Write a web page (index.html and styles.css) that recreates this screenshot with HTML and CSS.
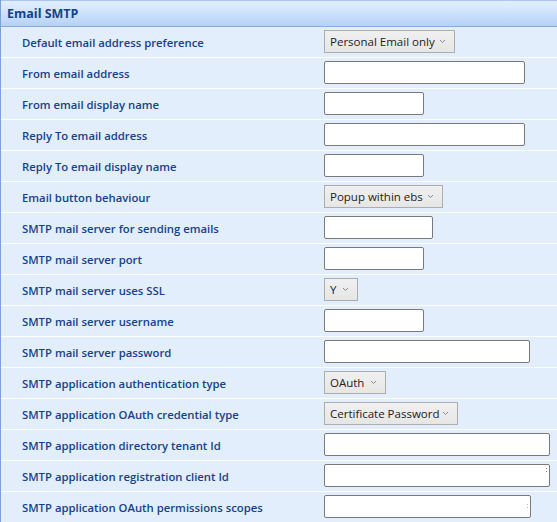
FILE: index.html
```html
<!DOCTYPE html>
<html>
<head>
<meta charset="utf-8">
<link rel="stylesheet" href="styles.css">
</head>
<body>
<div class="panel">
  <div class="panel-header">Email SMTP</div>
  <div class="rows">
    <div class="row"><div class="label">Default email address preference</div><div class="field"><div class="select w131"><span>Personal Email only</span><svg class="chev" width="7" height="5" viewBox="0 0 7 5"><path d="M1 1 L3.5 3.5 L6 1" fill="none" stroke="#888" stroke-width="1"/></svg></div></div></div>
    <div class="row"><div class="label">From email address</div><div class="field"><input class="text w201" type="text"></div></div>
    <div class="row"><div class="label">From email display name</div><div class="field"><input class="text w100" type="text"></div></div>
    <div class="row"><div class="label">Reply To email address</div><div class="field"><input class="text w201" type="text"></div></div>
    <div class="row"><div class="label">Reply To email display name</div><div class="field"><input class="text w100" type="text"></div></div>
    <div class="row"><div class="label">Email button behaviour</div><div class="field"><div class="select w119"><span>Popup within ebs</span><svg class="chev" width="7" height="5" viewBox="0 0 7 5"><path d="M1 1 L3.5 3.5 L6 1" fill="none" stroke="#888" stroke-width="1"/></svg></div></div></div>
    <div class="row"><div class="label">SMTP mail server for sending emails</div><div class="field"><input class="text w109" type="text"></div></div>
    <div class="row"><div class="label">SMTP mail server port</div><div class="field"><input class="text w100" type="text"></div></div>
    <div class="row"><div class="label">SMTP mail server uses SSL</div><div class="field"><div class="select w34"><span>Y</span><svg class="chev" width="7" height="5" viewBox="0 0 7 5"><path d="M1 1 L3.5 3.5 L6 1" fill="none" stroke="#888" stroke-width="1"/></svg></div></div></div>
    <div class="row"><div class="label">SMTP mail server username</div><div class="field"><input class="text w100" type="text"></div></div>
    <div class="row"><div class="label">SMTP mail server password</div><div class="field"><input class="text w206" type="password"></div></div>
    <div class="row"><div class="label">SMTP application authentication type</div><div class="field"><div class="select w62"><span>OAuth</span><svg class="chev" width="7" height="5" viewBox="0 0 7 5"><path d="M1 1 L3.5 3.5 L6 1" fill="none" stroke="#888" stroke-width="1"/></svg></div></div></div>
    <div class="row"><div class="label">SMTP application OAuth credential type</div><div class="field"><div class="select w134"><span>Certificate Password</span><svg class="chev" width="7" height="5" viewBox="0 0 7 5"><path d="M1 1 L3.5 3.5 L6 1" fill="none" stroke="#888" stroke-width="1"/></svg></div></div></div>
    <div class="row"><div class="label">SMTP application directory tenant Id</div><div class="field"><input class="text w226" type="text"></div></div>
    <div class="row"><div class="label">SMTP application registration client Id</div><div class="field"><div class="area w226 grip-top"></div></div></div>
    <div class="row"><div class="label">SMTP application OAuth permissions scopes</div><div class="field"><div class="area w207 grip-mid"></div></div></div>
  </div>
</div>
</body>
</html>
```
FILE: styles.css
```css
html, body {
  margin: 0;
  padding: 0;
  background: #e3eefd;
}
.panel {
  width: 557px;
  height: 522px;
  box-sizing: border-box;
  border-left: 1px solid #7ba2dc;
  background: #e3eefd;
  overflow: hidden;
  font-family: "Open Sans", "Noto Sans", sans-serif;
}
.panel-header {
  height: 25px;
  box-sizing: content-box;
  border-top: 1px solid #a9c7f0;
  border-bottom: 1px solid #87ace4;
  background: linear-gradient(to bottom, #e4effd 0%, #d0e2fb 45%, #b5d1f9 100%);
  color: #15428b;
  font-weight: 700;
  font-size: 12.5px;
  line-height: 25px;
  padding-left: 6px;
}
.rows {
  display: flex;
  flex-direction: column;
}
.row {
  display: grid;
  grid-template-columns: 323px 1fr;
  height: 30px;
  border-bottom: 1px solid #ffffff;
}
.label {
  padding-left: 21px;
  color: #15428b;
  font-weight: 600;
  font-size: 11.3px;
  line-height: 31px;
  white-space: nowrap;
}
.field {
  padding-top: 3px;
}
.text, .area {
  display: block;
  box-sizing: border-box;
  height: 23px;
  margin: 0;
  border: 1px solid #7a7a7a;
  border-radius: 2px;
  background: #ffffff;
  padding: 0 4px;
  outline: none;
}
.area {
  position: relative;
}
.grip-top::after,
.grip-mid::after {
  content: "";
  position: absolute;
  right: 2px;
  width: 1px;
  height: 5px;
  background: repeating-linear-gradient(to bottom, #777 0 1px, transparent 1px 3px);
}
.grip-top::after { top: 3px; }
.grip-mid::after { top: 8px; background: repeating-linear-gradient(to bottom, #bbb 0 1px, transparent 1px 3px); }
.select {
  box-sizing: border-box;
  height: 23px;
  border: 1px solid #adadad;
  background: linear-gradient(to bottom, #f0f0f0, #e6e6e6);
  display: flex;
  align-items: center;
  justify-content: space-between;
  padding: 0 8px 0 5px;
  font-family: "Open Sans", "Noto Sans", sans-serif;
  font-size: 11.5px;
  color: #222222;
  white-space: nowrap;
}
.chev { flex: none; }
.w34 { width: 34px; }
.w62 { width: 62px; }
.w100 { width: 100px; }
.w109 { width: 109px; }
.w119 { width: 119px; }
.w131 { width: 131px; }
.w134 { width: 134px; }
.w201 { width: 201px; }
.w206 { width: 206px; }
.w207 { width: 207px; }
.w226 { width: 226px; }
```
